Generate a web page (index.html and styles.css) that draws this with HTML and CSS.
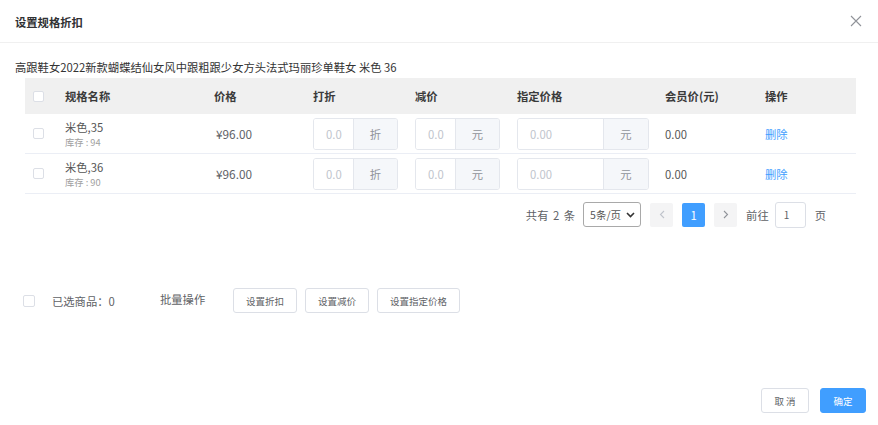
FILE: index.html
```html
<!DOCTYPE html>
<html lang="zh">
<head>
<meta charset="utf-8">
<title>设置规格折扣</title>
<link rel="stylesheet" href="styles.css">
</head>
<body>
<div class="dialog">
  <div class="dlg-header">
    <span class="dlg-title">设置规格折扣</span>
    <svg class="close" width="12" height="12" viewBox="0 0 12 12"><path d="M1 1L11 11M11 1L1 11" stroke="#909399" stroke-width="1.1" fill="none"/></svg>
  </div>
  <div class="dlg-body">
    <div class="product-name">高跟鞋女2022新款蝴蝶结仙女风中跟粗跟少女方头法式玛丽珍单鞋女 米色 36</div>
    <div class="table">
      <div class="row head">
        <div class="cell c-check"><span class="checkbox"></span></div>
        <div class="cell">规格名称</div>
        <div class="cell">价格</div>
        <div class="cell">打折</div>
        <div class="cell">减价</div>
        <div class="cell">指定价格</div>
        <div class="cell">会员价(元)</div>
        <div class="cell">操作</div>
      </div>
      <div class="row">
        <div class="cell c-check"><span class="checkbox"></span></div>
        <div class="cell spec"><div class="spec-name">米色,35</div><div class="stock">库存 : 94</div></div>
        <div class="cell price">¥96.00</div>
        <div class="cell"><div class="ig ig-s"><span class="ig-in">0.0</span><span class="ig-ap">折</span></div></div>
        <div class="cell"><div class="ig ig-s"><span class="ig-in">0.0</span><span class="ig-ap">元</span></div></div>
        <div class="cell"><div class="ig ig-l"><span class="ig-in">0.00</span><span class="ig-ap">元</span></div></div>
        <div class="cell val">0.00</div>
        <div class="cell"><span class="link">删除</span></div>
      </div>
      <div class="row">
        <div class="cell c-check"><span class="checkbox"></span></div>
        <div class="cell spec"><div class="spec-name">米色,36</div><div class="stock">库存 : 90</div></div>
        <div class="cell price">¥96.00</div>
        <div class="cell"><div class="ig ig-s"><span class="ig-in">0.0</span><span class="ig-ap">折</span></div></div>
        <div class="cell"><div class="ig ig-s"><span class="ig-in">0.0</span><span class="ig-ap">元</span></div></div>
        <div class="cell"><div class="ig ig-l"><span class="ig-in">0.00</span><span class="ig-ap">元</span></div></div>
        <div class="cell val">0.00</div>
        <div class="cell"><span class="link">删除</span></div>
      </div>
    </div>
    <div class="pager">
      <span class="total">共有&nbsp;2&nbsp;条</span>
      <div class="sizes"><span>5条/页</span><svg width="9" height="6" viewBox="0 0 9 6"><path d="M1 1L4.5 4.5L8 1" stroke="#333" stroke-width="1.6" fill="none"/></svg></div>
      <span class="pbtn"><svg width="6" height="9" viewBox="0 0 6 9"><path d="M5 1L1.5 4.5L5 8" stroke="#c0c4cc" stroke-width="1.1" fill="none"/></svg></span>
      <span class="pbtn active">1</span>
      <span class="pbtn"><svg width="6" height="9" viewBox="0 0 6 9"><path d="M1 1L4.5 4.5L1 8" stroke="#909399" stroke-width="1.1" fill="none"/></svg></span>
      <span class="goto">前往</span>
      <span class="jump">1</span>
      <span class="page-unit">页</span>
    </div>
    <div class="batch">
      <span class="checkbox big"></span>
      <span class="selected">已选商品：0</span>
      <span class="batch-label">批量操作</span>
      <span class="btn">设置折扣</span>
      <span class="btn">设置减价</span>
      <span class="btn">设置指定价格</span>
    </div>
  </div>
  <div class="dlg-footer">
    <span class="btn">取 消</span>
    <span class="btn primary">确定</span>
  </div>
</div>
</body>
</html>
```

FILE: styles.css
```css
* { box-sizing: border-box; }
html, body { margin: 0; padding: 0; background: #fff; }
body {
  font-family: "Noto Sans CJK SC", "Noto Sans", sans-serif;
  font-size: 11.3px;
  color: #606266;
  width: 878px;
  height: 425px;
  overflow: hidden;
}
.dialog { width: 878px; height: 425px; display: flex; flex-direction: column; }
.dlg-header {
  height: 43px;
  border-bottom: 1px solid #f0f0f0;
  display: flex;
  align-items: center;
  justify-content: space-between;
  padding: 0 16px 0 15px;
}
.dlg-title { font-weight: bold; color: #303133; font-size: 11.3px; margin-top: 2px; }
.dlg-body { padding: 0 22px 0 15px; flex: 1; }
.product-name { color: #333; margin-top: 15px; line-height: 18px; height: 18px; font-size: 11.3px; }
.table { margin-left: 10px; width: 831px; margin-top: 2px; }
.row {
  display: grid;
  grid-template-columns: 40px 149px 99px 102px 102px 148px 100px 91px;
  height: 40px;
  border-bottom: 1px solid #ebeef5;
  align-items: center;
}
.row.head { height: 36px; background: #f0f0f0; border-bottom: none; font-weight: bold; color: #3a3a3a; }
.cell { display: flex; align-items: center; }
.c-check { padding-left: 8px; }
.checkbox {
  display: inline-block;
  width: 11px; height: 11px;
  border: 1px solid #dcdfe6;
  border-radius: 2px;
  background: #fff;
}
.checkbox.big { width: 12px; height: 12px; }
.spec { flex-direction: column; align-items: flex-start; }
.spec-name { color: #555; line-height: 14px; font-size: 11.3px; margin-top: 1px; }
.stock { color: #a0a0a0; font-size: 9.3px; line-height: 14px; margin-top: 1px; }
.price { padding-left: 2px; font-size: 11.8px; }
.ig {
  display: flex;
  height: 32px;
  border: 1px solid #e4e7ed;
  border-radius: 3px;
  overflow: hidden;
}
.ig-s { width: 85px; }
.ig-l { width: 132px; }
.ig-in {
  flex: 1;
  display: flex;
  align-items: center;
  padding-left: 12px;
  color: #c0c4cc;
  background: #fff;
}
.ig-ap {
  width: 44px;
  display: flex;
  align-items: center;
  justify-content: center;
  background: #f5f7fa;
  border-left: 1px solid #e4e7ed;
  color: #909399;
}
.ig-l .ig-ap { width: 45px; }
.val { color: #555; }
.link { color: #409eff; }
.pager {
  display: flex;
  align-items: center;
  justify-content: flex-end;
  margin-top: 8px;
  height: 25px;
  padding-right: 30px;
}
.total { margin-right: 8px; word-spacing: 2px; }
.sizes {
  width: 58px; height: 25px;
  border: 1px solid #a9a9a9;
  border-radius: 3px;
  display: flex;
  align-items: center;
  justify-content: space-between;
  padding: 0 5px 0 6px;
  margin-right: 9px;
  color: #555;
  font-size: 10.5px;
}
.pbtn {
  width: 23px; height: 24px;
  background: #f4f4f5;
  border-radius: 2px;
  display: flex;
  align-items: center;
  justify-content: center;
  margin-right: 9px;
  color: #606266;
}
.pbtn.active { background: #409eff; color: #fff; }
.goto { margin-right: 6px; }
.jump {
  width: 31px; height: 26px;
  border: 1px solid #dcdfe6;
  border-radius: 3px;
  display: flex;
  align-items: center;
  padding-left: 8px;
  font-size: 10px;
  color: #606266;
  margin-right: 9px;
}
.batch {
  display: flex;
  align-items: center;
  margin-top: 61px;
  height: 25px;
  padding-left: 8px;
}
.selected { margin-left: 17px; width: 108px; }
.batch-label { width: 73px; margin-top: -4px; }
.btn {
  display: inline-flex;
  align-items: center;
  justify-content: center;
  height: 25px;
  padding: 0 12px;
  border: 1px solid #dcdfe6;
  border-radius: 3px;
  background: #fff;
  font-size: 9.5px;
  color: #606266;
  margin-right: 8px;
}
.dlg-footer {
  display: flex;
  justify-content: flex-end;
  padding: 0 12px 12px 0;
}
.dlg-footer .btn { width: 48px; padding: 0; margin-right: 0; margin-left: 11px; }
.dlg-footer .btn.primary { width: 46px; background: #409eff; border-color: #409eff; color: #fff; }
```
